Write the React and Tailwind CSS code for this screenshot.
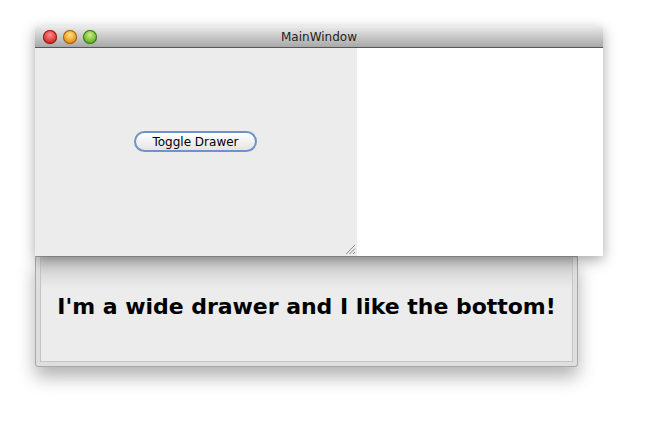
import React from "react";

function Light({ from, to, ring }) {
  return (
    <div
      className="w-[14px] h-[14px] rounded-full"
      style={{
        background: `radial-gradient(circle at 50% 35%, ${from} 0%, ${to} 75%)`,
        boxShadow: `inset 0 0 0 1px ${ring}`,
      }}
    />
  );
}

export default function App() {
  return (
    <div className="w-[661px] h-[433px] bg-white overflow-hidden pl-[35px] pt-[26px]" style={{ fontFamily: '"DejaVu Sans", sans-serif' }}>
      <div className="flex flex-col w-[568px]">
        {/* Window */}
        <div className="relative z-10 w-[568px] flex flex-col rounded-t-[4px] shadow-[0_4px_14px_rgba(0,0,0,0.35)]">
          <div className="relative h-[22px] rounded-t-[4px] bg-gradient-to-b from-[#ececec] to-[#a8a8a8] border-b border-[#565656] flex items-center px-[8px] gap-[6px]">
            <Light from="#ff8a8a" to="#d02020" ring="#9a1a1a" />
            <Light from="#ffe07a" to="#e08a10" ring="#a06010" />
            <Light from="#c8f080" to="#5aa820" ring="#3a7a15" />
            <div className="absolute inset-0 flex items-center justify-center text-[12px] text-[#222]">MainWindow</div>
          </div>
          <div className="flex h-[208px]">
            <div className="relative w-[322px] bg-[#ececec] flex items-center justify-center">
              <button className="mb-[21px] ml-[-1px] h-[21px] w-[123px] rounded-full border-2 border-[#6d93c8] bg-gradient-to-b from-white to-[#e4e4e4] text-[12px] text-black leading-none flex items-center justify-center">
                Toggle Drawer
              </button>
              <svg className="absolute right-[1px] bottom-[1px]" width="11" height="11" viewBox="0 0 11 11">
                <path d="M10 1 L1 10 M10 4.5 L4.5 10 M10 8 L8 10" stroke="#8a8a8a" strokeWidth="1" />
              </svg>
            </div>
            <div className="flex-1 bg-white" />
          </div>
        </div>
        {/* Drawer */}
        <div className="w-[543px] h-[111px] bg-[#dedede] border border-[#a8a8a8] rounded-b-[3px] px-[4px] pb-[4px] shadow-[0_10px_18px_rgba(0,0,0,0.3)]">
          <div className="h-full border border-t-0 border-[#c4c4c4] flex items-center justify-center pb-[5px] bg-gradient-to-b from-[#c8c8c8] via-[#ececec] via-30% to-[#ececec]">
            <span className="text-[22px] font-bold text-black tracking-[-0.03px] whitespace-nowrap">I'm a wide drawer and I like the bottom!</span>
          </div>
        </div>
      </div>
    </div>
  );
}
